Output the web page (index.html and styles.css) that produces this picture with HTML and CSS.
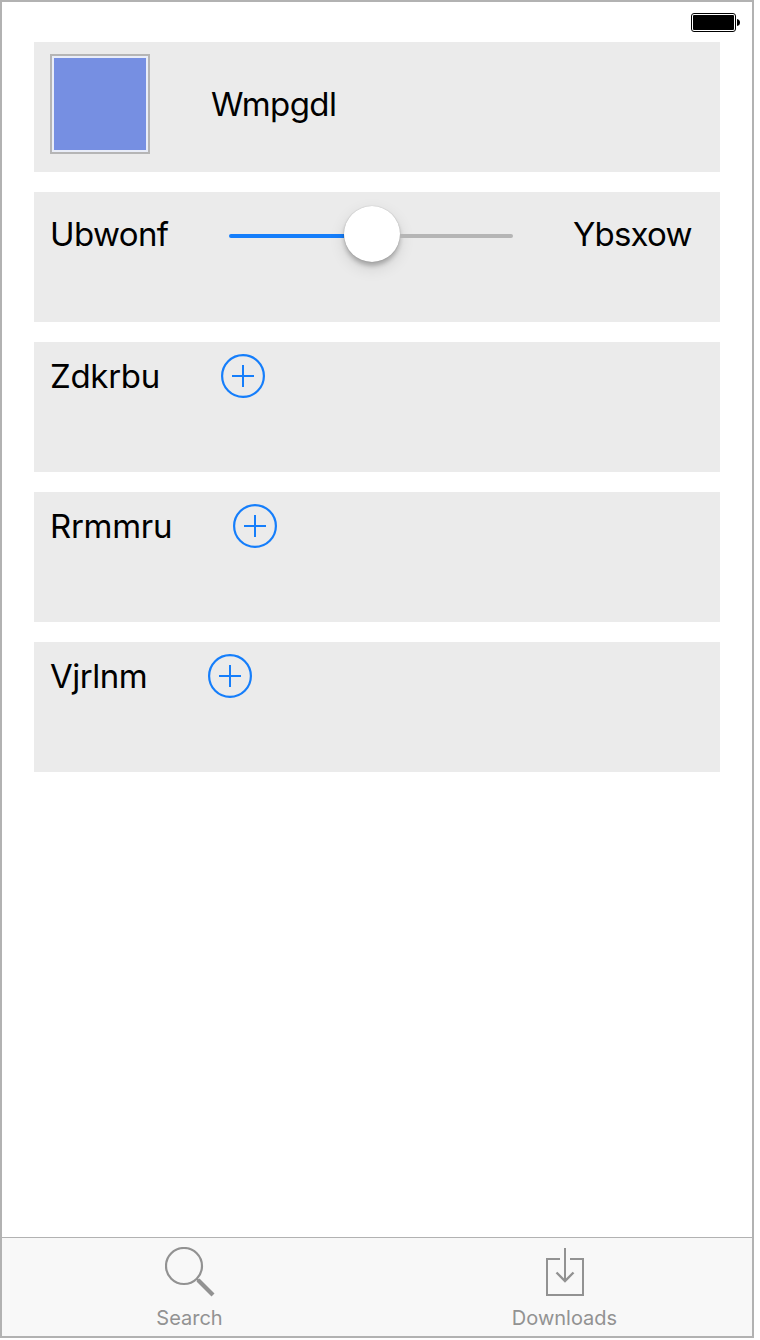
FILE: index.html
```html
<!DOCTYPE html>
<html lang="en">
<head>
<meta charset="utf-8">
<title>Search</title>
<link rel="stylesheet" href="styles.css">
</head>
<body>
<div class="phone">
  <header class="status">
    <svg class="battery" width="50" height="20" viewBox="0 0 50 20">
      <rect x="0.5" y="0.5" width="44" height="18" rx="2.5" fill="#fff" stroke="#000"/>
      <rect x="2" y="2" width="41" height="15" rx="1" fill="#000"/>
      <path d="M46 6 Q49 6.5 49 9.5 Q49 12.500 46 13 Z" fill="#000"/>
    </svg>
  </header>
  <main class="cards">
    <section class="card card-swatch">
      <div class="swatch"><div class="swatch-color"></div></div>
      <span class="label l-wmpgdl">Wmpgdl</span>
    </section>
    <section class="card card-slider">
      <span class="label l-ubwonf">Ubwonf</span>
      <div class="slider">
        <div class="fill"></div>
        <div class="thumb"></div>
        <div class="rest"></div>
      </div>
      <span class="label l-ybsxow">Ybsxow</span>
    </section>
    <section class="card card-add">
      <span class="label l-zdkrbu">Zdkrbu</span>
      <svg class="add" viewBox="0 0 44 44"><circle cx="22" cy="22" r="20.900"/><path d="M11 22H33M22 11V33" stroke-width="2"/></svg>
    </section>
    <section class="card card-add">
      <span class="label l-rrmmru">Rrmmru</span>
      <svg class="add" viewBox="0 0 44 44"><circle cx="22" cy="22" r="20.900"/><path d="M11 22H33M22 11V33" stroke-width="2"/></svg>
    </section>
    <section class="card card-add">
      <span class="label l-vjrlnm">Vjrlnm</span>
      <svg class="add" viewBox="0 0 44 44"><circle cx="22" cy="22" r="20.900"/><path d="M11 22H33M22 11V33" stroke-width="2"/></svg>
    </section>
  </main>
  <nav class="tabs">
    <div class="tab">
      <svg class="tab-icon" viewBox="0 0 50 50"><circle cx="19" cy="19" r="18"/><path d="M31.500 31.500 34 34"/><path d="M33 33 48 48" stroke-width="4.200"/></svg>
      <span class="tab-label">Search</span>
    </div>
    <div class="tab">
      <svg class="tab-icon" viewBox="0 0 50 50"><path d="M20 12H7V48H43V12H30" stroke-width="2"/><path d="M25 1V34" stroke-width="2"/><path d="M16.500 25.500 25 34 33.500 25.500" stroke-width="2.400"/></svg>
      <span class="tab-label tab-label-downloads">Downloads</span>
    </div>
  </nav>
</div>
</body>
</html>
```
FILE: styles.css
```css
body {
  margin: 0;
  background: #fff;
  font-family: Inter, "Liberation Sans", sans-serif;
}
.phone {
  box-sizing: border-box;
  display: flex;
  flex-direction: column;
  width: 754px;
  height: 1338px;
  border: 2px solid #b2b2b2;
  background: #fff;
}
.status {
  display: flex;
  justify-content: flex-end;
  height: 29px;
  padding: 11px 11px 0 0;
}
.battery {
  display: block;
}
.cards {
  display: flex;
  flex: 1;
  flex-direction: column;
  gap: 20px;
  padding: 0 32px;
}
.card {
  box-sizing: border-box;
  display: flex;
  align-items: flex-start;
  height: 130px;
  padding: 12px 16px;
  background: #ebebeb;
}
.label {
  flex: none;
  font-size: 33px;
  line-height: 40px;
  white-space: nowrap;
  color: #000;
}
.swatch {
  box-sizing: border-box;
  width: 100px;
  height: 100px;
  margin-right: 60px;
  padding: 2px;
  border: 2px solid #b5b5b5;
  background: #e9edf8;
}
.swatch-color {
  height: 92px;
  background: #768fe2;
}
.l-wmpgdl {
  margin-top: 30px;
  padding-left: 1px;
  letter-spacing: -0.6px;
}
.card-slider {
  padding-top: 22px;
}
.slider {
  display: flex;
  align-items: center;
  width: 284px;
  height: 56px;
  margin-top: -8px;
}
.fill {
  width: 115px;
  height: 4px;
  margin-top: 4px;
  border-radius: 2px 0 0 2px;
  background: #157efb;
}
.thumb {
  width: 56px;
  height: 56px;
  border-radius: 50%;
  background: #fff;
  box-shadow: 0 0 1px rgba(0, 0, 0, 0.3), 0 4px 4px rgba(0, 0, 0, 0.22), 0 6px 16px rgba(0, 0, 0, 0.12);
}
.rest {
  width: 113px;
  height: 4px;
  margin-top: 4px;
  border-radius: 0 2px 2px 0;
  background: #b5b5b5;
}
.l-ubwonf {
  width: 179px;
  letter-spacing: -0.6px;
}
.l-ybsxow {
  margin-left: 60px;
  letter-spacing: -0.8px;
}
.card-add .label {
  margin-top: 2px;
}
.l-zdkrbu {
  width: 171px;
  letter-spacing: -0.3px;
}
.l-rrmmru {
  width: 183px;
  letter-spacing: -0.3px;
}
.l-vjrlnm {
  width: 158px;
  letter-spacing: -0.5px;
}
.add {
  width: 44px;
  height: 44px;
  fill: none;
  stroke: #157efb;
  stroke-width: 2.2;
}
.tabs {
  display: flex;
  height: 98px;
  border-top: 1px solid #b2b2b2;
  background: #f8f8f8;
}
.tab {
  display: flex;
  flex: 1;
  flex-direction: column;
  align-items: center;
  padding-top: 9px;
}
.tab-icon {
  width: 50px;
  height: 50px;
  fill: none;
  stroke: #929292;
  stroke-width: 2.2;
}
.tab-label {
  margin-top: 9px;
  font-size: 20px;
  line-height: 24px;
  color: #929292;
}
```
